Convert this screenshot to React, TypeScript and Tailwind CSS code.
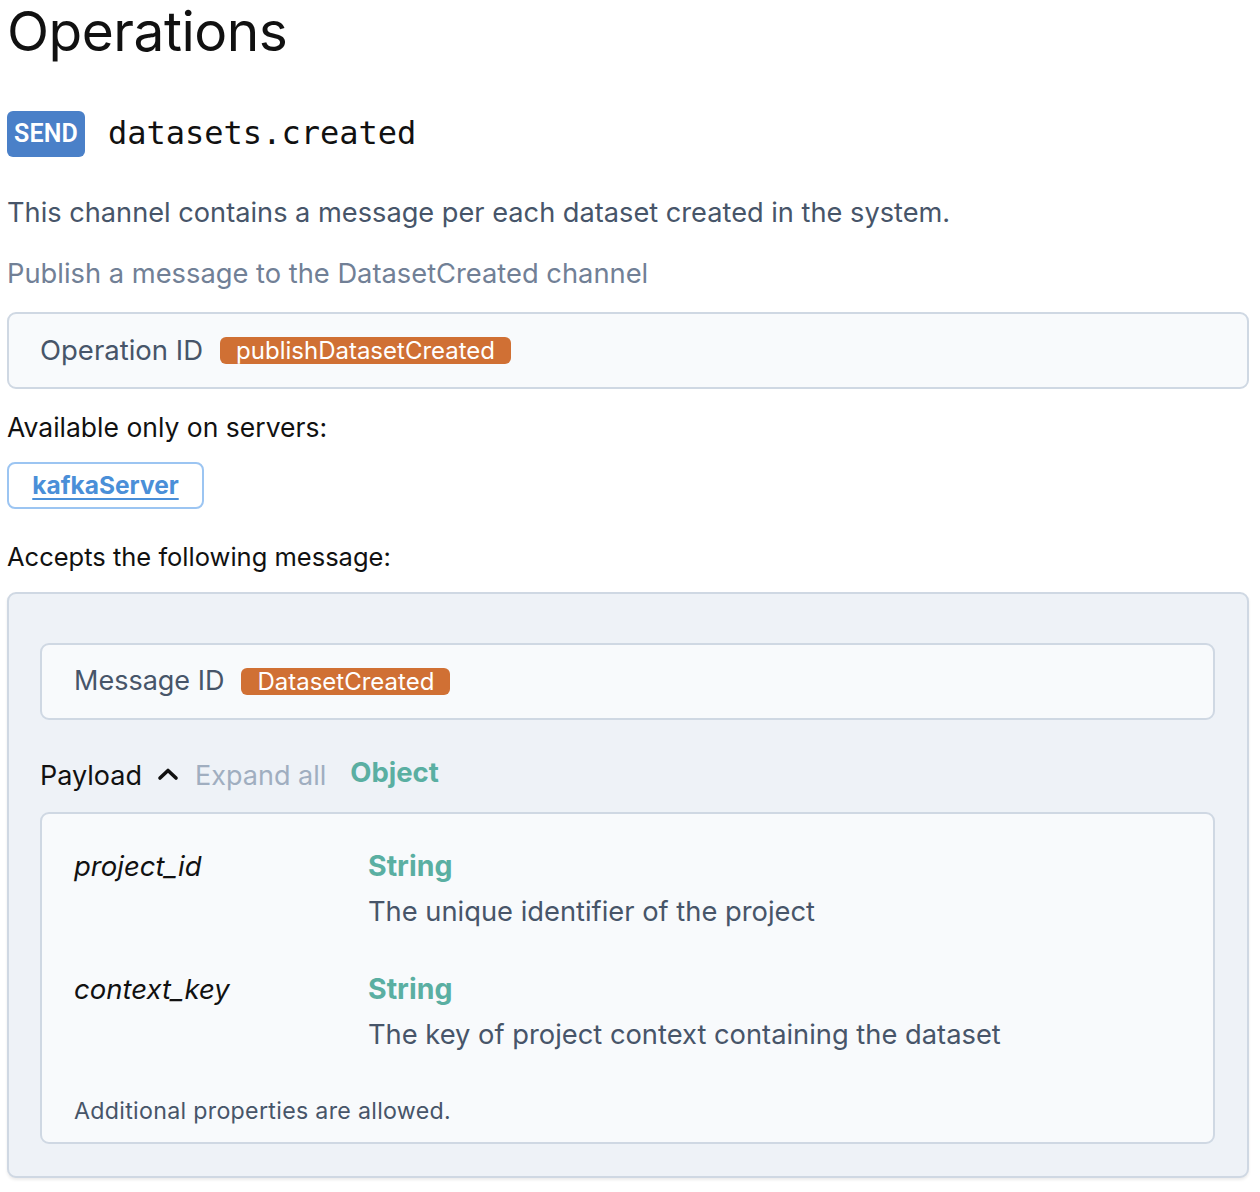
import React from "react";

const sans = "font-['Inter','Noto_Sans',sans-serif]";

function Chevron() {
  return (
    <svg width="22" height="14" viewBox="0 0 22 14" className="mt-[-4px]">
      <path d="M3 11 L11 3.5 L19 11" fill="none" stroke="#111" strokeWidth="3.6" strokeLinecap="round" strokeLinejoin="round" />
    </svg>
  );
}

function Prop({ name, desc }: { name: string; desc: string }) {
  return (
    <div className="flex">
      <div className="w-[294px] shrink-0 text-[27.5px] leading-[36px] italic text-[#111]">{name}</div>
      <div className="flex flex-col">
        <div className="text-[28.5px] leading-[36px] font-bold text-[#5aafa2]">String</div>
        <div className="mt-[10px] text-[27.3px] leading-[36px] text-[#475569]">{desc}</div>
      </div>
    </div>
  );
}

export default function App() {
  return (
    <div className={`${sans} bg-white min-h-[1192px] w-[1260px] pl-[7px] pr-[11px] antialiased`}>
      <h1 className="text-[55px] leading-[66px] font-normal text-[#111] tracking-[-0.5px] mt-[-2px]">Operations</h1>

      <div className="mt-[47px] flex items-center h-[46px]">
        <span className="h-[46px] w-[78px] flex items-center justify-center rounded-[6px] bg-[#4a80c8] text-white text-[25px] font-semibold font-['Roboto',sans-serif] tracking-[0.2px]">
          SEND
        </span>
        <span className="ml-[23px] font-['DejaVu_Sans_Mono',monospace] text-[32px] text-[#111] mt-[-2px]">datasets.created</span>
      </div>

      <p className="mt-[38px] text-[27.2px] leading-[36px] text-[#475569]">
        This channel contains a message per each dataset created in the system.
      </p>
      <p className="mt-[25px] text-[27.3px] leading-[36px] text-[#718096]">
        Publish a message to the DatasetCreated channel
      </p>

      <div className="mt-[20px] h-[77px] rounded-[9px] border-2 border-[#cfd8e3] bg-[#f8fafc] flex items-center pl-[31px]">
        <span className="text-[27.5px] text-[#475569]">Operation ID</span>
        <span className="ml-[17px] h-[27px] px-[16px] flex items-center rounded-[6px] bg-[#d07034] text-white text-[24px]">
          publishDatasetCreated
        </span>
      </div>

      <p className="mt-[20px] text-[26.5px] leading-[36px] text-[#111]">Available only on servers:</p>

      <div className="mt-[17px] inline-flex h-[47px] w-[197px] items-center justify-center rounded-[8px] border-2 border-[#9cc5f2] bg-white">
        <span className="text-[24.5px] font-bold text-[#4a8fd8] underline underline-offset-[4px] decoration-2">kafkaServer</span>
      </div>

      <p className="mt-[30px] text-[25.5px] leading-[36px] text-[#111]">Accepts the following message:</p>

      <div className="mt-[17px] rounded-[9px] border-2 border-[#cfd8e3] bg-[#eef2f7] shadow-[0_2px_3px_rgba(0,0,0,0.08)] pt-[49px] pb-[32px] pl-[31px] pr-[32px]">
        <div className="h-[77px] rounded-[9px] border-2 border-[#cfd8e3] bg-[#f8fafc] flex items-center pl-[32px]">
          <span className="text-[27px] text-[#475569]">Message ID</span>
          <span className="ml-[17px] h-[27px] px-[16px] flex items-center rounded-[6px] bg-[#d07034] text-white text-[24px]">
            DatasetCreated
          </span>
        </div>

        <div className="mt-[37px] flex items-center h-[38px]">
          <span className="text-[27px] text-[#111]">Payload</span>
          <span className="ml-[15px] flex items-center"><Chevron /></span>
          <span className="ml-[16px] text-[27px] text-[#a0aec0]">Expand all</span>
          <span className="ml-[24px] text-[27.5px] font-bold text-[#5aafa2] mt-[-6px]">Object</span>
        </div>

        <div className="mt-[17px] rounded-[9px] border-2 border-[#cfd8e3] bg-[#f8fafc] pl-[32px] pr-[32px] pt-[34px] pb-[16px]">
          <div className="flex flex-col gap-[41px]">
            <Prop name="project_id" desc="The unique identifier of the project" />
            <Prop name="context_key" desc="The key of project context containing the dataset" />
          </div>
          <p className="mt-[43px] text-[23.2px] leading-[30px] text-[#475569] tracking-[0.3px]">Additional properties are allowed.</p>
        </div>
      </div>
    </div>
  );
}
